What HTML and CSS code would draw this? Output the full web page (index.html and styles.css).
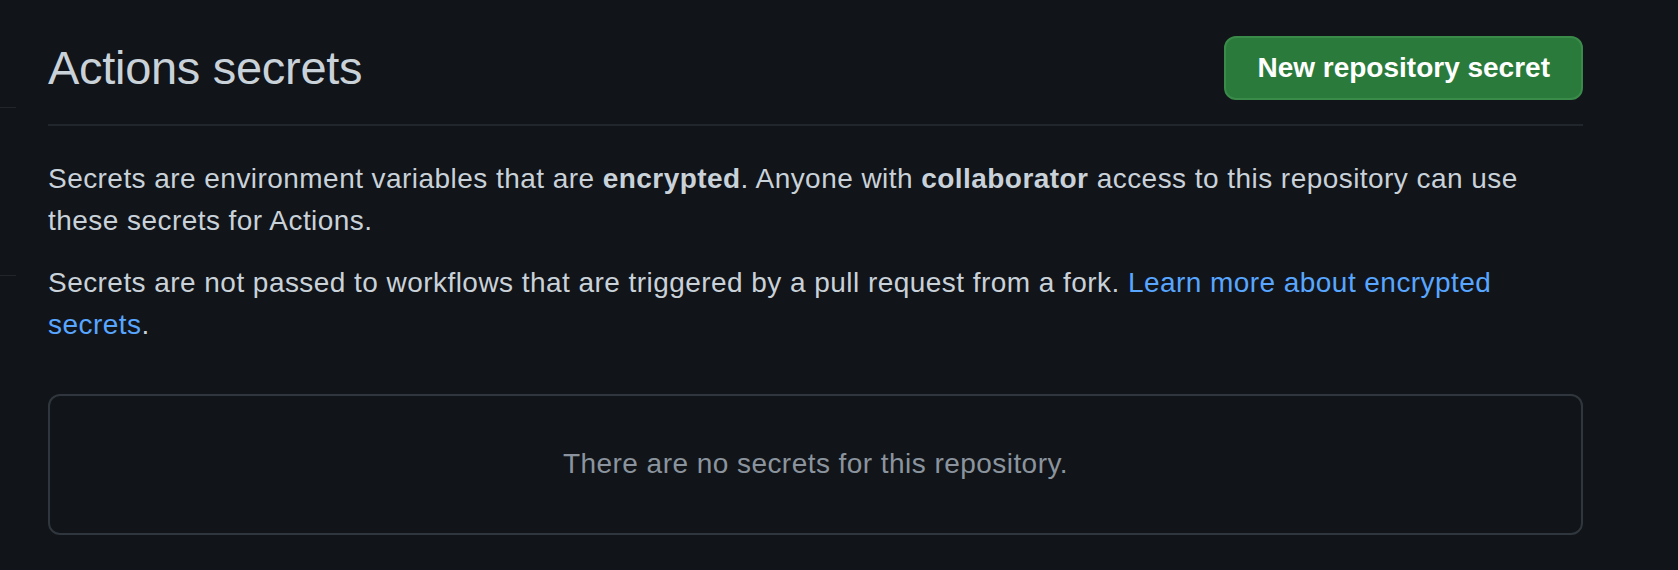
FILE: index.html
```html
<!DOCTYPE html>
<html lang="en">
<head>
<meta charset="utf-8">
<title>Actions secrets</title>
<link rel="stylesheet" href="styles.css">
</head>
<body>
<div class="layout">
  <nav class="sidebar">
    <div class="side-item side-item-first"></div>
    <div class="side-item side-item-second"></div>
  </nav>
  <main class="main">
    <div class="subhead">
      <h2 class="subhead-heading">Actions secrets</h2>
      <a class="btn-primary" href="#">New repository secret</a>
    </div>
    <p class="text">Secrets are environment variables that are <strong>encrypted</strong>. Anyone with <strong>collaborator</strong> access to this repository can use these secrets for Actions.</p>
    <p class="text text-last">Secrets are not passed to workflows that are triggered by a pull request from a fork. <a class="link" href="#">Learn more about encrypted secrets</a>.</p>
    <div class="blankslate">There are no secrets for this repository.</div>
  </main>
</div>
</body>
</html>
```

FILE: styles.css
```css
html, body {
  margin: 0;
  padding: 0;
  background: #111418;
}

body {
  font-family: "Liberation Sans", Arial, sans-serif;
  color: #c9d1d9;
  height: 570px;
  overflow: hidden;
}

.layout {
  display: flex;
  gap: 32px;
  padding-right: 95px;
}

.sidebar {
  width: 16px;
  flex: none;
  display: flex;
  flex-direction: column;
}

.side-item {
  border-bottom: 1px solid #21262d;
}

.side-item-first {
  height: 107px;
}

.side-item-second {
  height: 167px;
}

.main {
  flex: 1;
  min-width: 0;
  padding-top: 36px;
}

.subhead {
  display: flex;
  align-items: center;
  justify-content: space-between;
  padding-bottom: 24px;
  border-bottom: 2px solid #21262d;
  margin-bottom: 32px;
}

.subhead-heading {
  margin: 0;
  font-size: 47px;
  font-weight: 400;
  line-height: 60px;
  color: #c9d1d9;
  letter-spacing: -0.3px;
}

.btn-primary {
  display: inline-block;
  box-sizing: border-box;
  height: 64px;
  padding: 10px 31px;
  font-size: 28px;
  line-height: 40px;
  font-weight: 700;
  color: #ffffff;
  text-decoration: none;
  background: #2a7b3b;
  border: 2px solid #3a8a4a;
  border-radius: 12px;
  white-space: nowrap;
}

.text {
  margin: 0 0 20px;
  font-size: 28px;
  line-height: 42px;
  letter-spacing: 0.45px;
}

.text strong {
  font-weight: 700;
}

.text-last {
  margin-bottom: 48px;
}

.link {
  color: #58a6ff;
  text-decoration: none;
}

.blankslate {
  box-sizing: border-box;
  height: 141px;
  padding: 47px 32px 46px;
  border: 2px solid #30363d;
  border-radius: 12px;
  text-align: center;
  font-size: 28px;
  line-height: 42px;
  letter-spacing: 0.45px;
  color: #8b949e;
}
```
